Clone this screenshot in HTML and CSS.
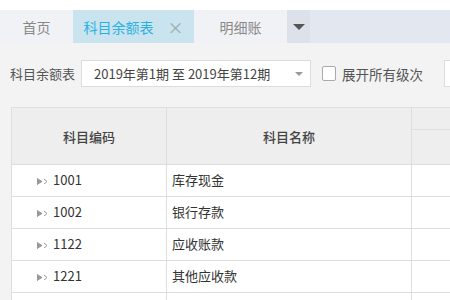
FILE: index.html
```html
<!DOCTYPE html>
<html lang="zh-CN">
<head>
    <meta charset="UTF-8">
    <title>科目余额表</title>
    <link rel="stylesheet" href="styles.css">
</head>
<body>
    <div class="tabs">
        <div class="tab">首页</div>
        <div class="tab active">科目余额表 <span class="close">×</span></div>
        <div class="tab">明细账</div>
        <div class="tab more"><span class="caret"></span></div>
    </div>

    <div class="page">
        <div class="toolbar">
            <span class="label">科目余额表</span>
            <div class="period">
                <span>2019年第1期 至 2019年第12期</span>
                <span class="caret small"></span>
            </div>
            <label class="check"><span class="box"></span>展开所有级次</label>
            <div class="extra"></div>
        </div>

        <table class="grid">
            <thead>
                <tr>
                    <th rowspan="2" class="c1">科目编码</th>
                    <th rowspan="2" class="c2">科目名称</th>
                    <th class="c3 top"></th>
                </tr>
                <tr>
                    <th class="c3"></th>
                </tr>
            </thead>
            <tbody>
                <tr><td class="code"><svg class="tree" viewBox="0 0 12 7"><path d="M0 0.5 L5 3.5 L0 6.5 Z"/><path d="M7 1 L10 3.5 L7 6" fill="none"/></svg>1001</td><td>库存现金</td><td></td></tr>
                <tr><td class="code"><svg class="tree" viewBox="0 0 12 7"><path d="M0 0.5 L5 3.5 L0 6.5 Z"/><path d="M7 1 L10 3.5 L7 6" fill="none"/></svg>1002</td><td>银行存款</td><td></td></tr>
                <tr><td class="code"><svg class="tree" viewBox="0 0 12 7"><path d="M0 0.5 L5 3.5 L0 6.5 Z"/><path d="M7 1 L10 3.5 L7 6" fill="none"/></svg>1122</td><td>应收账款</td><td></td></tr>
                <tr><td class="code"><svg class="tree" viewBox="0 0 12 7"><path d="M0 0.5 L5 3.5 L0 6.5 Z"/><path d="M7 1 L10 3.5 L7 6" fill="none"/></svg>1221</td><td>其他应收款</td><td></td></tr>
                <tr><td class="code"></td><td></td><td></td></tr>
            </tbody>
        </table>
    </div>
</body>
</html>
```

FILE: styles.css
```css
html, body {
    margin: 0;
    padding: 0;
    width: 450px;
    height: 300px;
    overflow: hidden;
}
body {
    font-family: "Noto Sans CJK SC", "Noto Sans", sans-serif;
    font-size: 13px;
    color: #333;
    padding-top: 10px;
    box-sizing: border-box;
    background: linear-gradient(#fff 0, #fff 10px, #f3f3f3 10px);
}
.tabs {
    display: flex;
    height: 33px;
    background: #e3e7ef;
}
.tab {
    display: flex;
    align-items: center;
    justify-content: center;
    flex-shrink: 0;
    font-size: 14px;
    color: #888;
    background: #f1f2f5;
    width: 73px;
}
.tab.active {
    width: 121px;
    background: #c9e4ef;
    color: #2db1e0;
    gap: 14px;
}
.tab.active .close {
    color: #9aa;
    font-size: 16px;
}
.tab:nth-child(3) {
    width: 93px;
}
.tab.more {
    width: 23px;
    background: #dde1ea;
}
.caret {
    width: 0;
    height: 0;
    border-left: 6px solid transparent;
    border-right: 6px solid transparent;
    border-top: 6px solid #555;
}
.caret.small {
    border-left-width: 4px;
    border-right-width: 4px;
    border-top: 4px solid #999;
}
.page {
    padding: 17px 0 0 11px;
    height: 257px;
    box-sizing: border-box;
    overflow: hidden;
}
.toolbar {
    display: flex;
    align-items: center;
    height: 27px;
    color: #555;
    white-space: nowrap;
}
.toolbar > * {
    flex-shrink: 0;
}
.label {
    margin-left: -1px;
    width: 71px;
}
.period {
    display: flex;
    align-items: center;
    justify-content: space-between;
    box-sizing: border-box;
    width: 230px;
    height: 27px;
    padding: 0 7px 0 12px;
    background: #fff;
    border: 1px solid #dcdcdc;
    color: #444;
    font-size: 13px;
}
.check {
    display: flex;
    align-items: center;
    margin-left: 11px;
    font-size: 13.5px;
    color: #555;
}
.box {
    width: 12px;
    height: 13px;
    border: 1px solid #aaa;
    border-radius: 2px;
    background: #fff;
    margin-right: 6px;
}
.extra {
    margin-left: 21px;
    width: 30px;
    height: 27px;
    box-sizing: border-box;
    background: #fff;
    border: 1px solid #dcdcdc;
}
.grid {
    margin-top: 20px;
    border-collapse: collapse;
    table-layout: fixed;
    width: 600px;
    background: #fff;
}
.grid th, .grid td {
    border: 1px solid #dedede;
    padding: 0;
}
.grid th {
    background: #eeeeee;
    font-weight: 500;
    color: #444;
    font-size: 13px;
}
.grid th.c1 { width: 154px; height: 56px; }
.grid th.c2 { width: 244px; }
.grid th.top { height: 21px; }
.grid td {
    height: 32px;
    color: #333;
    padding-left: 5px;
    padding-bottom: 2px;
    box-sizing: border-box;
}
.grid td.code {
    padding-left: 25px;
}
.grid tr td:nth-child(3), .grid th.c3 {
    border-left: 1px solid #cfcfcf;
}
.tree {
    width: 12px;
    height: 7px;
    margin-right: 4px;
    fill: #999;
    stroke: #999;
    stroke-width: 1;
}
```
